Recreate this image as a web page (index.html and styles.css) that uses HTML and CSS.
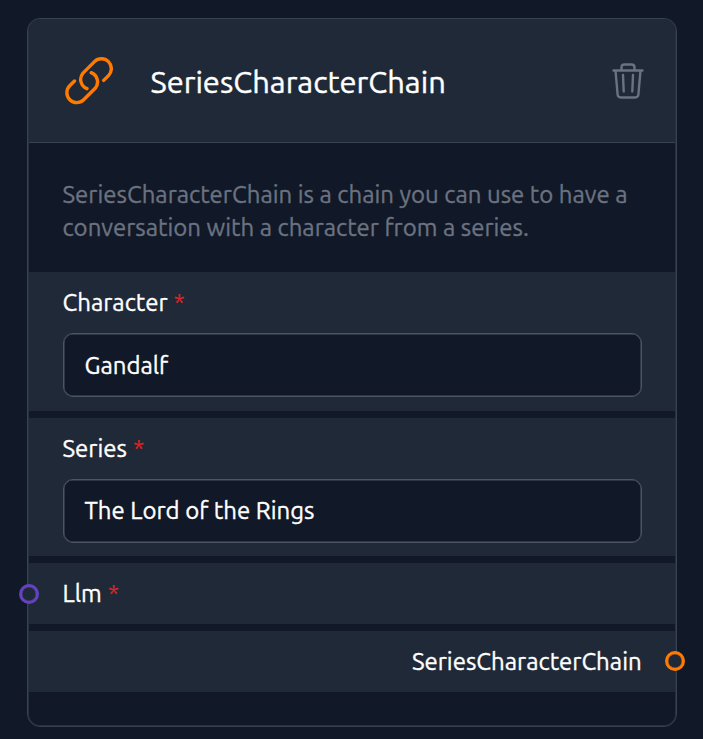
FILE: index.html
```html
<!DOCTYPE html>
<html lang="en">
<head>
<meta charset="utf-8">
<title>SeriesCharacterChain</title>
<link rel="stylesheet" href="styles.css">
</head>
<body>
<main class="node">
  <header class="head">
    <svg class="chain" viewBox="0 0 48 48"><path d="M9.500 24 4.700 28.800A9.900 9.900 0 0 0 18.700 42.800L30.200 31.300A9.900 9.900 0 0 0 26.200 15.700M22 31.700A9.900 9.900 0 0 1 18 16.100L29.500 4.600A9.900 9.900 0 0 1 43.500 18.600L38.700 23.400"/></svg>
    <h1 class="title">SeriesCharacterChain</h1>
    <svg class="trash" viewBox="0 0 32 38"><path d="M1.500 8.500h29M3.500 8.500l2.100 24c.2 2 1.300 3 3.200 3h14.400c1.900 0 3-1 3.200-3l2.100-24M9.500 8V5.500c0-2 1.200-3 3-3h7c1.800 0 3 1 3 3V8M11 13l.7 16.500M21 13l-.7 16.500"/></svg>
  </header>
  <p class="desc">SeriesCharacterChain is a chain you can use to have a<br>conversation with a character from a series.</p>
  <section class="row field">
    <label class="label">Character<span class="req">*</span></label>
    <div class="input">Gandalf</div>
  </section>
  <section class="row field">
    <label class="label">Series<span class="req">*</span></label>
    <div class="input">The Lord of the Rings</div>
  </section>
  <section class="row port">
    <i class="handle in"></i>
    <label class="label">Llm<span class="req">*</span></label>
  </section>
  <section class="row port out-row">
    SeriesCharacterChain
    <i class="handle out"></i>
  </section>
</main>
</body>
</html>
```
FILE: styles.css
```css
* { box-sizing: border-box; }
body {
  margin: 0;
  padding: 18px 26px 12px 27px;
  height: 739px;
  background: #111827;
  color: #fff;
  font: 24px/33px Ubuntu, "Noto Sans", sans-serif;
  -webkit-text-stroke: .35px currentColor;
  overflow: hidden;
}
.node {
  height: 709px;
  padding: 0 1px;
  border: 1px solid #374151;
  border-radius: 13px;
  box-shadow: inset 0 0 0 1px #263141;
}
.head {
  display: flex;
  align-items: center;
  height: 124px;
  padding: 0 31px 0 36px;
  background: #1f2937;
  border-bottom: 1px solid #374151;
  border-radius: 12px 12px 0 0;
}
.chain { width: 48px; height: 48px; fill: none; stroke: #ff7a00; stroke-width: 3.400; stroke-linecap: round; stroke-linejoin: round; }
.trash { width: 32px; height: 38px; margin-left: auto; fill: none; stroke: #6b7280; stroke-width: 2.400; stroke-linecap: round; stroke-linejoin: round; }
.title { margin: 2px 0 0 37.5px; font-size: 30.85px; font-weight: 400; -webkit-text-stroke: .4px currentColor; }
.desc { margin: 0; height: 129px; padding: 35px 33.5px 0; color: #6b7280; white-space: nowrap; }
.row { background: #1f2937; margin-bottom: 7px; padding: 0 33.5px; white-space: nowrap; }
.field { height: 139px; padding-top: 14px; }
.field + .field { height: 138px; }
.label { display: flex; gap: 6px; }
.req { color: #dc2626; -webkit-text-stroke: 0; }
.input {
  height: 64px;
  margin-top: 14px;
  padding: 15px 21px;
  background: #111827;
  border: 1px solid #4b5563;
  border-radius: 10px;
  box-shadow: inset 0 0 0 .5px #4b5563;
}
.field + .field .input { padding-top: 14px; }
.port { position: relative; height: 61px; padding-top: 14px; }
.out-row { padding-right: 33.3px; text-align: right; }
.handle { position: absolute; top: 20.5px; width: 20px; height: 20px; border: 3px solid; border-radius: 50%; background: #1f2937; }
.handle::after { content: ""; position: absolute; inset: 0; border-radius: 50%; box-shadow: inset 0 0 0 .3px; }
.in { left: -10px; border-color: #6344be; color: #6344be; }
.out { right: -10px; top: 20px; border-color: #ff7a00; color: #ff7a00; }
```
